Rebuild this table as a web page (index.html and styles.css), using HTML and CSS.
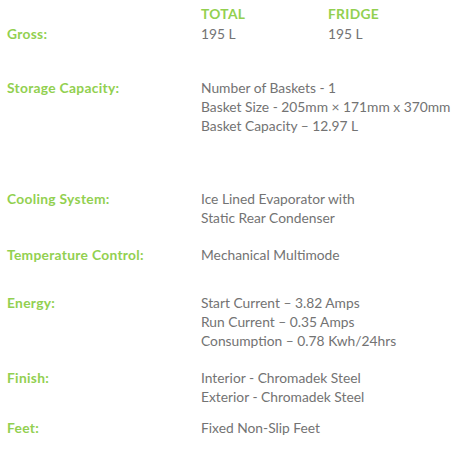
FILE: index.html
```html
<!DOCTYPE html>
<html>
<head>
<meta charset="utf-8">
<link rel="stylesheet" href="styles.css">
</head>
<body>
<div class="specs">
  <div class="row row-head">
    <div class="label"></div>
    <div class="val head">TOTAL</div>
    <div class="val head">FRIDGE</div>
  </div>
  <div class="row row-gross">
    <div class="label">Gross:</div>
    <div class="val">195 L</div>
    <div class="val">195 L</div>
  </div>
  <div class="row row-storage">
    <div class="label">Storage Capacity:</div>
    <div class="val wide">Number of Baskets - 1<br>Basket Size - 205mm × 171mm x 370mm<br>Basket Capacity – 12.97 L</div>
  </div>
  <div class="row row-cooling">
    <div class="label">Cooling System:</div>
    <div class="val wide">Ice Lined Evaporator with<br>Static Rear Condenser</div>
  </div>
  <div class="row row-temp">
    <div class="label">Temperature Control:</div>
    <div class="val wide">Mechanical Multimode</div>
  </div>
  <div class="row row-energy">
    <div class="label">Energy:</div>
    <div class="val wide">Start Current – 3.82 Amps<br>Run Current – 0.35 Amps<br>Consumption – 0.78 Kwh/24hrs</div>
  </div>
  <div class="row row-finish">
    <div class="label">Finish:</div>
    <div class="val wide">Interior - Chromadek Steel<br>Exterior - Chromadek Steel</div>
  </div>
  <div class="row row-feet">
    <div class="label">Feet:</div>
    <div class="val wide">Fixed Non-Slip Feet</div>
  </div>
</div>
</body>
</html>
```
FILE: styles.css
```css
html, body {
  margin: 0;
  padding: 0;
  background: #ffffff;
}
body {
  padding: 4.5px 0 0 7px;
  font-family: Lato, "Open Sans", sans-serif;
  font-size: 13.8px;
  line-height: 18.8px;
  color: #737373;
}
.row {
  display: grid;
  grid-template-columns: 194px 127px 1fr;
}
.label {
  color: #92d050;
  font-weight: bold;
  letter-spacing: 0.3px;
}
.head {
  color: #92d050;
  font-weight: bold;
  letter-spacing: 0.3px;
}
.wide {
  grid-column: 2 / 4;
}
.row-gross { margin-top: 1.7px; }
.row-storage { margin-top: 35.2px; }
.row-cooling { margin-top: 54.6px; }
.row-temp { margin-top: 18.4px; }
.row-energy { margin-top: 29.2px; }
.row-finish { margin-top: 18.6px; }
.row-feet { margin-top: 12.4px; }
```
